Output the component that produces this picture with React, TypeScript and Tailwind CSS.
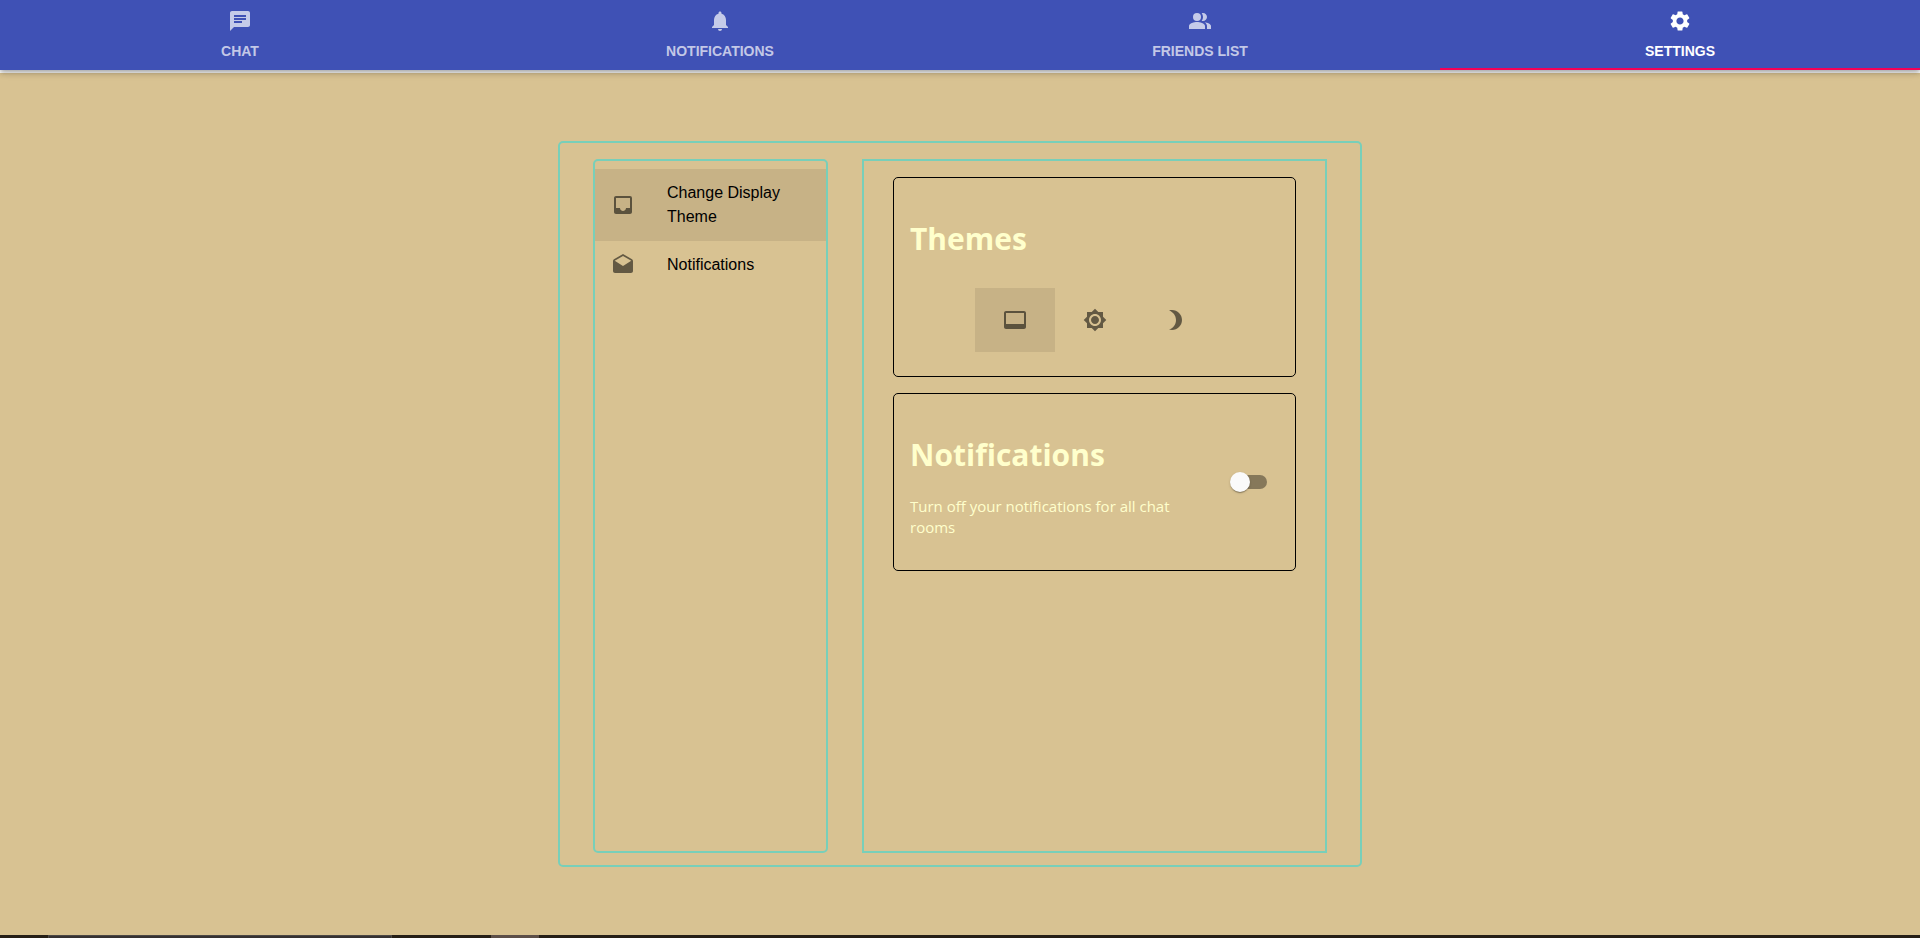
import { useState } from "react";
import type { ReactNode } from "react";
import {
  MdBrightness3,
  MdBrightness7,
  MdChat,
  MdDrafts,
  MdInbox,
  MdNotifications,
  MdSettings,
  MdVideoLabel,
} from "react-icons/md";

function PeopleIcon() {
  return (
    <svg viewBox="0 0 24 24" width="1em" height="1em" fill="currentColor" aria-hidden="true">
      <path d="M16.67 13.13C18.04 14.06 19 15.32 19 17v3h4v-3c0-2.18-3.57-3.47-6.33-3.87z" />
      <circle cx="9" cy="8" r="4" />
      <path d="M15 12c2.21 0 4-1.79 4-4s-1.79-4-4-4c-.47 0-.91.1-1.33.24C14.5 5.27 15 6.58 15 8s-.5 2.73-1.33 3.76c.42.14.86.24 1.33.24zM9 13c-2.67 0-8 1.34-8 4v3h16v-3c0-2.66-5.33-4-8-4z" />
    </svg>
  );
}

const tabs: { label: string; icon: ReactNode }[] = [
  { label: "CHAT", icon: <MdChat /> },
  { label: "NOTIFICATIONS", icon: <MdNotifications /> },
  { label: "FRIENDS LIST", icon: <PeopleIcon /> },
  { label: "SETTINGS", icon: <MdSettings /> },
];

const sections: { label: string; icon: ReactNode }[] = [
  { label: "Change Display Theme", icon: <MdInbox /> },
  { label: "Notifications", icon: <MdDrafts /> },
];

const themes: { label: string; icon: ReactNode }[] = [
  { label: "Default theme", icon: <MdVideoLabel /> },
  { label: "Light theme", icon: <MdBrightness7 /> },
  { label: "Dark theme", icon: <MdBrightness3 /> },
];

function NavBar() {
  const [active, setActive] = useState(3);
  return (
    <header className="relative z-10 bg-[#3f51b5] shadow-[0_2px_4px_-1px_rgba(0,0,0,0.2),0_4px_5px_0_rgba(0,0,0,0.14),0_1px_10px_0_rgba(0,0,0,0.12)]">
      <nav className="grid grid-cols-4">
        {tabs.map((tab, i) => (
          <button
            key={tab.label}
            type="button"
            onClick={() => setActive(i)}
            className={
              i === active
                ? "flex h-[70px] flex-col items-center gap-1.5 border-b-2 border-[#f50057] pt-[9px] text-sm leading-6 font-semibold text-white"
                : "flex h-[70px] flex-col items-center gap-1.5 border-b-2 border-transparent pt-[9px] text-sm leading-6 font-semibold text-white/70"
            }
          >
            <span className="text-2xl leading-none">{tab.icon}</span>
            {tab.label}
          </button>
        ))}
      </nav>
    </header>
  );
}

function Sidebar() {
  const [active, setActive] = useState(0);
  return (
    <nav className="w-[235px] shrink-0 rounded-[5px] border-2 border-[#78cfb9] py-2">
      {sections.map((section, i) => (
        <button
          key={section.label}
          type="button"
          onClick={() => setActive(i)}
          className={
            i === active
              ? "flex w-full items-center gap-8 bg-black/8 px-4 py-3 text-left text-base text-black"
              : "flex w-full items-center gap-8 px-4 py-3 text-left text-base text-black"
          }
        >
          <span className="shrink-0 text-2xl leading-none text-black/54">{section.icon}</span>
          {section.label}
        </button>
      ))}
    </nav>
  );
}

function ThemeCard() {
  const [active, setActive] = useState(0);
  return (
    <section className="rounded-[5px] border border-black p-4">
      <h1 className="mt-6 mb-5 font-['Open_Sans',sans-serif] text-[30px] leading-[42px] font-bold text-[#ffffcc]">Themes</h1>
      <div className="flex justify-center py-2">
        {themes.map((theme, i) => (
          <button
            key={theme.label}
            type="button"
            aria-label={theme.label}
            onClick={() => setActive(i)}
            className={
              i === active
                ? "flex h-16 w-20 items-center justify-center bg-black/8 text-2xl text-black/54"
                : "flex h-16 w-20 items-center justify-center text-2xl text-black/54"
            }
          >
            {theme.icon}
          </button>
        ))}
      </div>
    </section>
  );
}

function NotificationCard() {
  return (
    <section className="flex items-center justify-between rounded-[5px] border border-black p-4 font-['Open_Sans',sans-serif] text-[#ffffcc]">
      <div className="w-[276px]">
        <h1 className="mt-6 mb-5 text-[30px] leading-[42px] font-bold">Notifications</h1>
        <p id="mute-label" className="mb-4 text-[15px] leading-[21px]">
          Turn off your notifications for all chat rooms
        </p>
      </div>
      <label className="flex cursor-pointer items-center p-3">
        <input type="checkbox" role="switch" aria-labelledby="mute-label" className="peer sr-only" />
        <span className="flex h-3.5 w-[34px] items-center rounded-full bg-black/38 peer-checked:justify-end">
          <span className="-mx-[3px] size-5 rounded-full bg-[#fafafa] shadow-[0_2px_1px_-1px_rgba(0,0,0,0.2),0_1px_1px_0_rgba(0,0,0,0.14),0_1px_3px_0_rgba(0,0,0,0.12)]" />
        </span>
      </label>
    </section>
  );
}

export default function App() {
  return (
    <div className="flex min-h-screen flex-col bg-[#d8c292] font-['Liberation_Sans',Arial,sans-serif]">
      <NavBar />
      <div className="h-[3px] bg-white" />
      <main className="flex grow justify-center pt-[68px] pb-[68px]">
        <div className="flex w-[804px] gap-[34px] rounded-[5px] border-2 border-[#78cfb9] px-[33px] pt-4 pb-3">
          <Sidebar />
          <div className="flex grow flex-col gap-4 border-2 border-[#78cfb9] px-[29px] py-4">
            <ThemeCard />
            <NotificationCard />
          </div>
        </div>
      </main>
      <footer className="flex h-[3px] bg-[#261f17]">
        <div className="ml-12 w-[344px] border-x border-t border-[#4c4844] bg-[#363232]" />
        <div className="ml-[99px] w-12 bg-[#5c4f49]" />
      </footer>
    </div>
  );
}
